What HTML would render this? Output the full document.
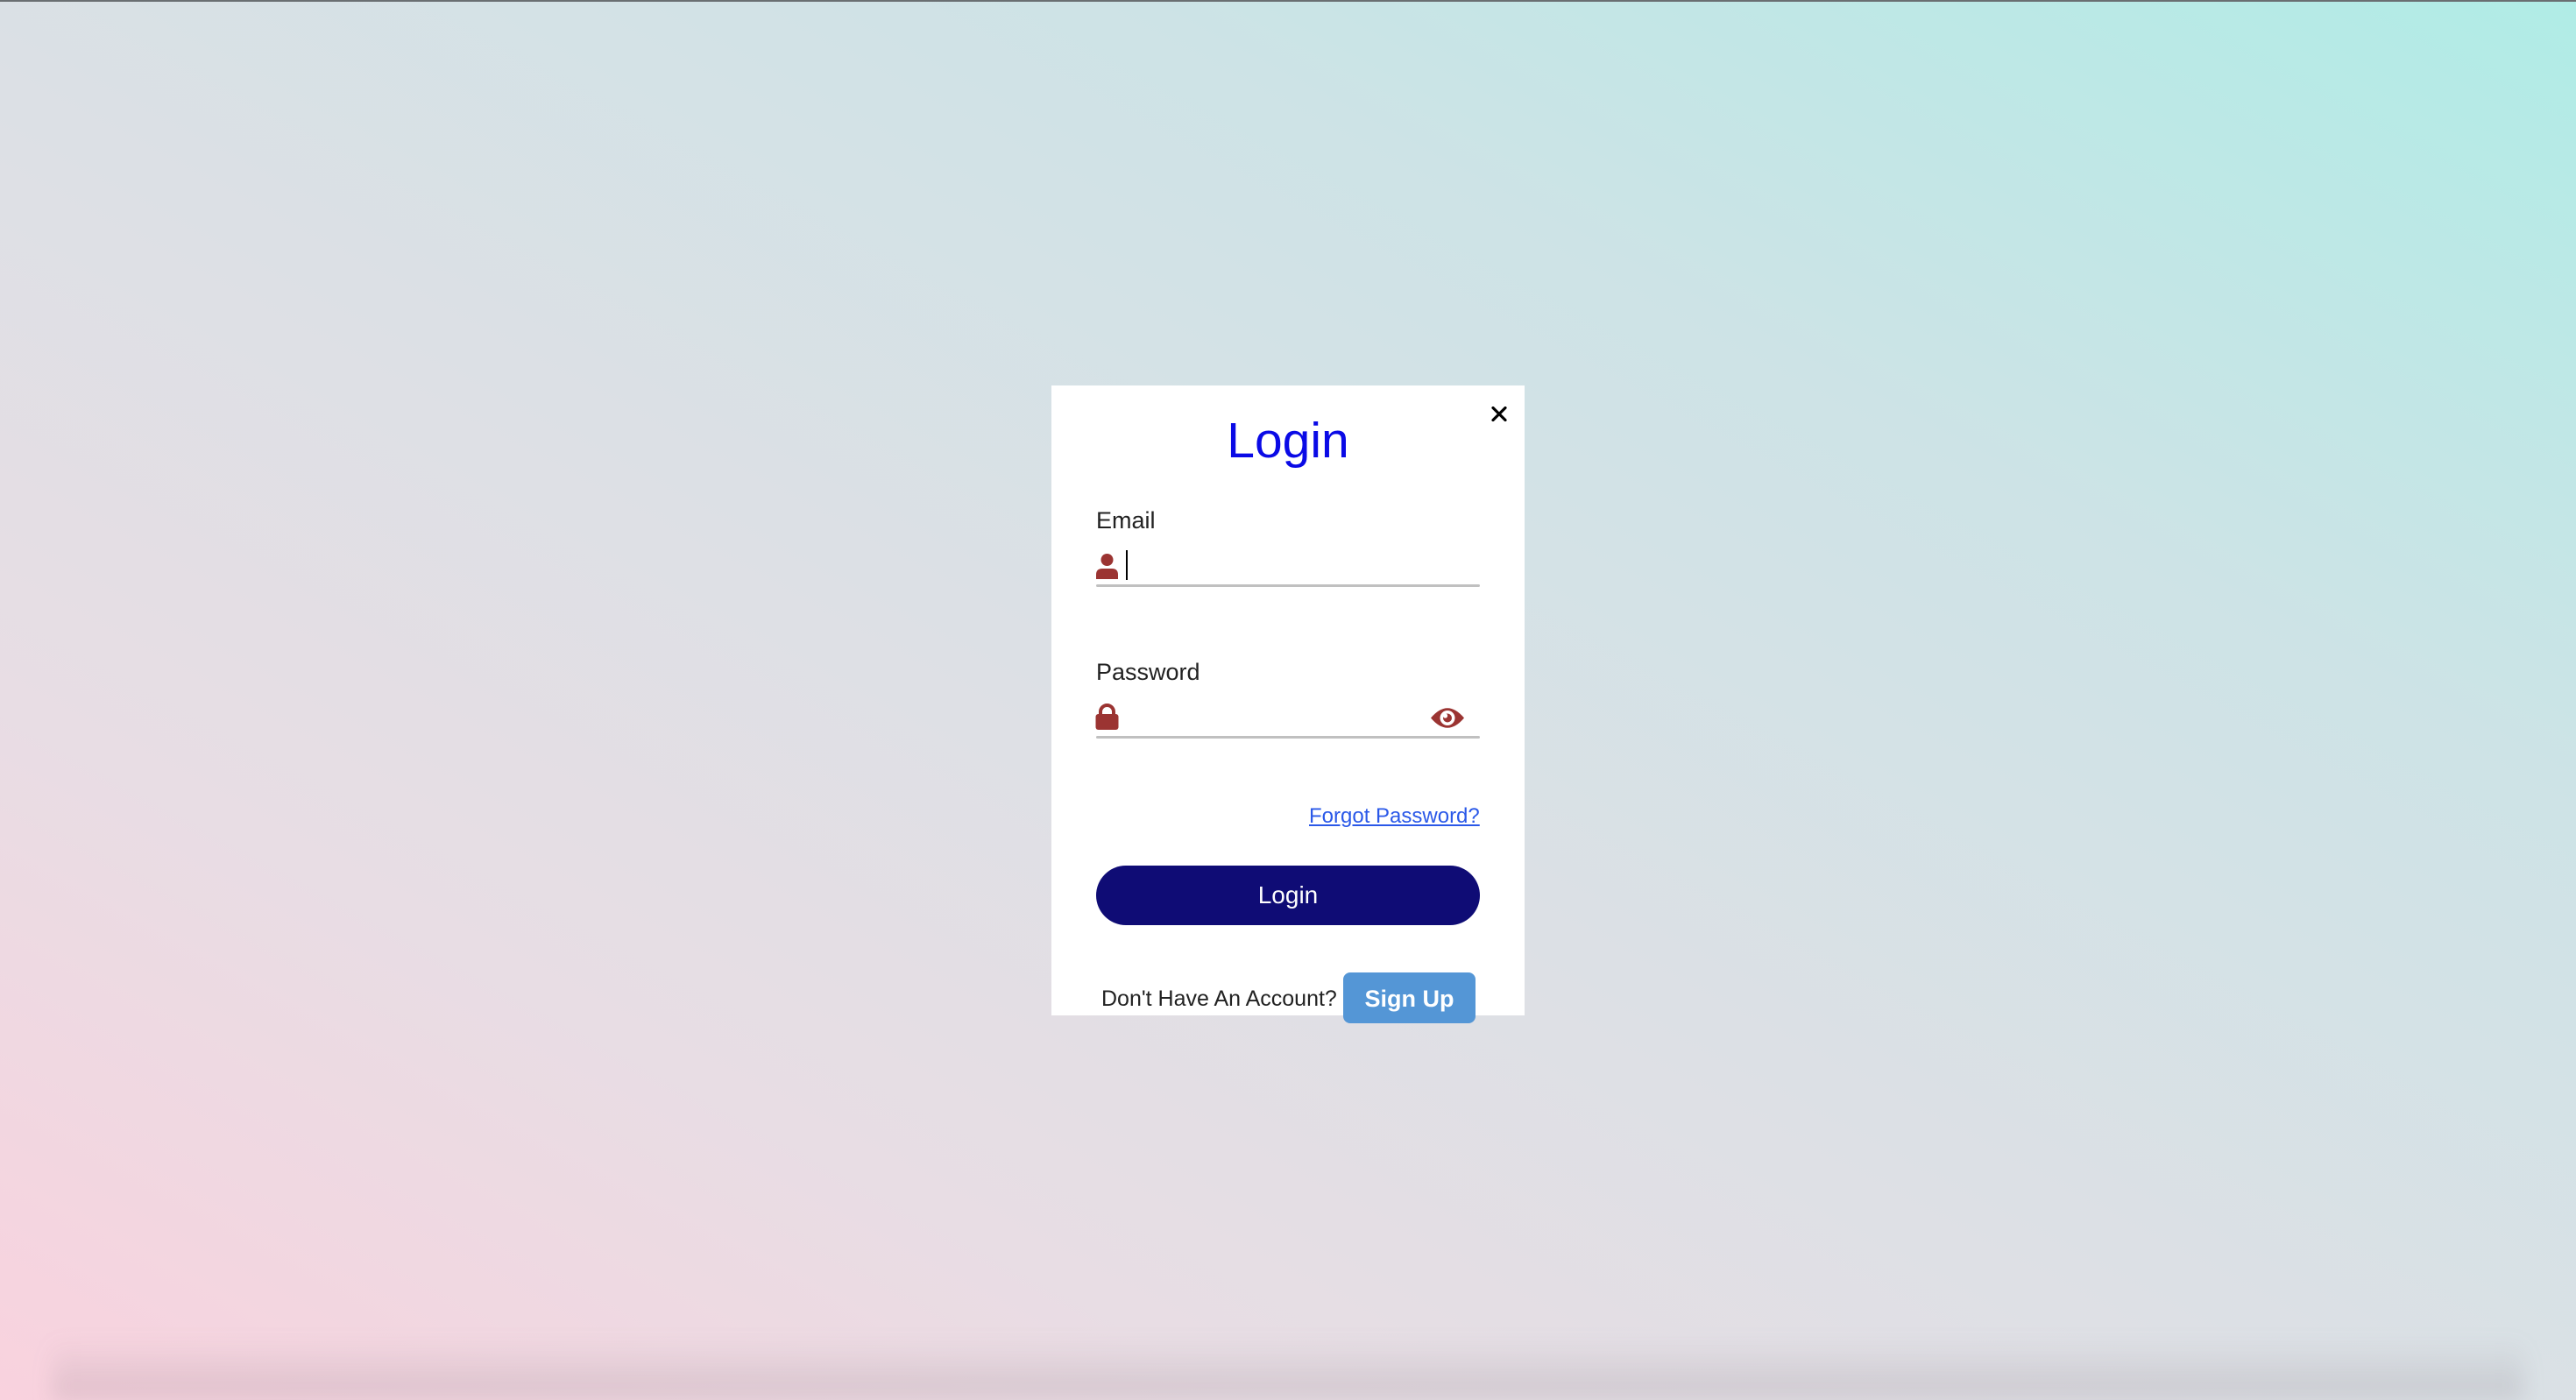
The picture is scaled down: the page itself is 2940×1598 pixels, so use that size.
<!DOCTYPE html>
<html><head><meta charset="utf-8"><style>
html,body{margin:0;padding:0;}
body{width:2940px;height:1598px;position:relative;overflow:hidden;
background:linear-gradient(to top right,#f9d2de 0%,#e8dde4 25%,#dde0e5 45%,#cde3e6 72%,#b0ece6 100%);
font-family:"Liberation Sans",sans-serif;}
.topline{position:absolute;left:0;top:0;width:2940px;height:2px;background:#6a6f72;}
.shade{position:absolute;left:60px;right:60px;bottom:0;height:70px;background:linear-gradient(to bottom,rgba(120,110,120,0),rgba(120,110,120,0.2));filter:blur(12px);}
.card{position:absolute;left:1200px;top:440px;width:540px;height:719px;background:#fff;}
.abs{position:absolute;white-space:nowrap;}
.title{left:0;width:540px;text-align:center;top:469px;font-size:57px;color:#0a0ae6;line-height:66px;}
.lbl{font-size:27px;color:#222;line-height:30px;}
.line{position:absolute;left:1251px;width:438px;height:3px;background:#c0c0c0;border-radius:2px;}
.btn{position:absolute;left:1251px;top:988px;width:438px;height:68px;border-radius:34px;background:#0f0c75;color:#fff;font-size:28px;text-align:center;line-height:68px;}
.su{position:absolute;left:1533px;top:1110px;width:151px;height:58px;border-radius:8px;background:#5496d6;color:#fff;font-weight:bold;font-size:27px;text-align:center;line-height:60px;}
</style></head><body>
<div class="topline"></div>
<div class="shade"></div>
<div class="card"></div>
<div class="abs title" style="left:1200px;top:470px">Login</div>
<svg class="abs" style="left:1702px;top:464px" width="18" height="17" viewBox="0 0 18 17"><path d="M2 1.5L16 15.5M16 1.5L2 15.5" stroke="#000" stroke-width="3.2" stroke-linecap="round"/></svg>
<div class="abs lbl" style="left:1251px;top:579px">Email</div>
<svg class="abs" style="left:1250px;top:632px" width="27" height="29" viewBox="0 0 27 29"><circle cx="13.5" cy="7" r="7" fill="#9b3432"/><path d="M1 29V24Q1 17 8 17H19Q26 17 26 24V29Z" fill="#9b3432"/></svg>
<div class="abs" style="left:1285px;top:628px;width:2px;height:34px;background:#000"></div>
<div class="line" style="top:667px"></div>
<div class="abs lbl" style="left:1251px;top:752px">Password</div>
<svg class="abs" style="left:1250px;top:803px" width="27" height="30" viewBox="0 0 27 30"><path d="M6 13V9.5A7.5 7.5 0 0 1 21 9.5V13" fill="none" stroke="#9b3432" stroke-width="4"/><rect x="0.5" y="12" width="26" height="18" rx="3" fill="#9b3432"/></svg>
<svg class="abs" style="left:1632px;top:804px" width="40" height="31" viewBox="0 0 40 31"><path d="M1 15.5Q20 -7 39 15.5Q20 38 1 15.5Z" fill="#9b3432"/><circle cx="20" cy="15.5" r="8.5" fill="#fff"/><circle cx="20" cy="15.5" r="5" fill="#9b3432"/><circle cx="17.5" cy="13" r="2.6" fill="#fff"/></svg>
<div class="line" style="top:840px"></div>
<div class="abs" style="left:1494px;top:918px;font-size:24px;color:#2a58e8;text-decoration:underline;line-height:28px">Forgot Password?</div>
<div class="btn">Login</div>
<div class="abs" style="left:1257px;top:1125px;font-size:25px;color:#222;line-height:30px">Don't Have An Account?</div>
<div class="su">Sign Up</div>
</body></html>
